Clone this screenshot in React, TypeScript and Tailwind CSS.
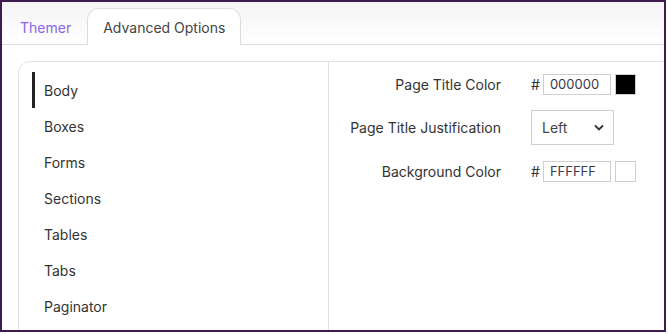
import { useState } from "react";

const navItems = ["Body", "Boxes", "Forms", "Sections", "Tables", "Tabs", "Paginator"];

function ColorField({ value, swatch }: { value: string; swatch: string }) {
  return (
    <div className="flex items-center">
      <span className="text-[14px] text-[#333] mr-[3px]">#</span>
      <input
        defaultValue={value}
        className="w-[68px] h-[21px] border border-[#cfcfcf] px-[6px] text-[13px] text-[#3a3a4a] outline-none"
      />
      <div className={`ml-[4px] w-[21px] h-[21px] border border-[#cfcfcf] ${swatch}`} />
    </div>
  );
}

export default function App() {
  const [active, setActive] = useState("Body");

  return (
    <div
      className="w-[666px] h-[332px] border-2 border-[#3d1a4f] bg-white overflow-hidden text-[#333]"
      style={{ fontFamily: "Inter, 'Liberation Sans', sans-serif" }}
    >
      {/* tabs */}
      <div className="h-[43px] flex items-end bg-gradient-to-b from-[#f4f4f4] to-white border-b border-[#dedede] pl-[18px]">
        <div className="h-[36px] flex items-center pr-[16px] text-[14px] text-[#8b63f0] -mb-px">Themer</div>
        <div className="h-[37px] flex items-center px-[15px] text-[14px] text-[#444] bg-white border border-b-0 border-[#dedede] rounded-t-[12px] -mb-px">
          Advanced Options
        </div>
      </div>

      {/* panel */}
      <div className="ml-[16px] mt-[16px] w-[680px] h-[300px] border border-[#e2e2e2] rounded-tl-[12px] flex">
        <div className="w-[310px] border-r border-[#dedede] pt-[10px] pl-[13px]">
          {navItems.map((item) => (
            <div
              key={item}
              onClick={() => setActive(item)}
              className={`h-[36px] flex items-center pl-[9px] text-[14px] text-[#333] border-l-[3px] ${
                active === item ? "border-[#222]" : "border-transparent"
              }`}
            >
              {item}
            </div>
          ))}
        </div>

        <div className="flex-1 pt-[11px] flex flex-col gap-[15px]">
          <div className="flex items-center h-[22px]">
            <div className="w-[172px] text-right text-[14px] text-[#333]">Page Title Color</div>
            <div className="ml-[30px]">
              <ColorField value="000000" swatch="bg-black" />
            </div>
          </div>
          <div className="flex items-center h-[35px]">
            <div className="w-[172px] text-right text-[14px] text-[#333]">Page Title Justification</div>
            <div className="ml-[30px]">
              <div className="w-[83px] h-[35px] border border-[#cfcfcf] flex items-center justify-between pl-[10px] pr-[9px] text-[14px] text-[#444]">
                <span>Left</span>
                <svg width="10" height="7" viewBox="0 0 10 7" fill="none">
                  <path d="M1 1.5 5 5.5 9 1.5" stroke="#333" strokeWidth="1.8" />
                </svg>
              </div>
            </div>
          </div>
          <div className="flex items-center h-[22px]">
            <div className="w-[172px] text-right text-[14px] text-[#333]">Background Color</div>
            <div className="ml-[30px]">
              <ColorField value="FFFFFF" swatch="bg-white" />
            </div>
          </div>
        </div>
      </div>
    </div>
  );
}
